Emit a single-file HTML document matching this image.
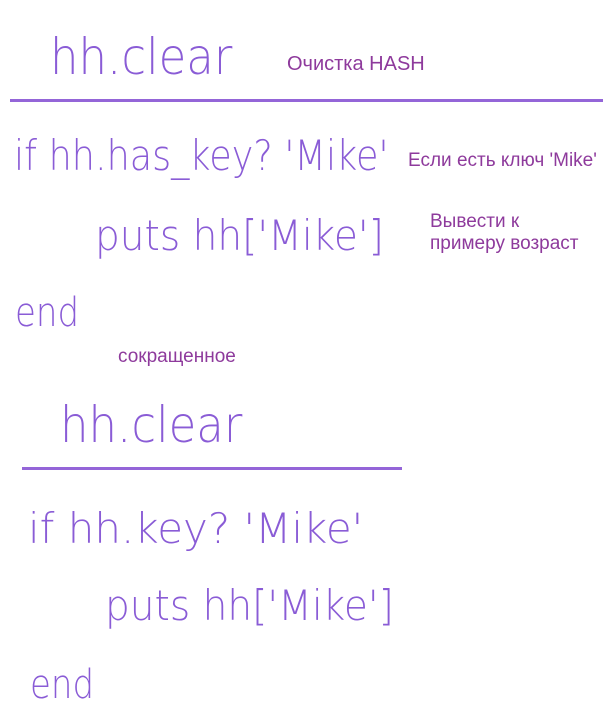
<!DOCTYPE html>
<html><head><meta charset="utf-8"><style>
body{margin:0;width:603px;height:706px;background:#fff;position:relative;overflow:hidden;font-family:"Liberation Sans",sans-serif}
.h{position:absolute;color:#8a5cd6;font-family:"DejaVu Sans","Liberation Sans",sans-serif;font-weight:300;white-space:nowrap;line-height:1;transform-origin:left top}
.t{position:absolute;color:#8e3a9c;font-size:19px;white-space:nowrap;line-height:22px}
.l{position:absolute;background:#9465d8;height:3px}
</style></head><body>
<div class="h" style="left:50px;top:32px;font-size:50px;transform:scaleX(.9)">hh.clear</div>
<div class="t" style="left:287px;top:53px;font-size:20px">Очистка HASH</div>
<div class="l" style="left:10px;top:99px;width:593px"></div>
<div class="h" style="left:14px;top:135px;font-size:42px;transform:scaleX(.87)">if hh.has_key? 'Mike'</div>
<div class="t" style="left:408px;top:150px">Если есть ключ 'Mike'</div>
<div class="h" style="left:95px;top:215px;font-size:42px;transform:scaleX(.93)">puts hh['Mike']</div>
<div class="t" style="left:430px;top:211px">Вывести к<br>примеру возраст</div>
<div class="h" style="left:15px;top:293px;font-size:40px;transform:scaleX(.85)">end</div>
<div class="t" style="left:118px;top:346px">сокращенное</div>
<div class="h" style="left:60px;top:400px;font-size:50px;transform:scaleX(.9)">hh.clear</div>
<div class="l" style="left:22px;top:467px;width:380px"></div>
<div class="h" style="left:28px;top:508px;font-size:42px">if hh.key? 'Mike'</div>
<div class="h" style="left:105px;top:585px;font-size:42px;transform:scaleX(.93)">puts hh['Mike']</div>
<div class="h" style="left:30px;top:665px;font-size:40px;transform:scaleX(.85)">end</div>
</body></html>
